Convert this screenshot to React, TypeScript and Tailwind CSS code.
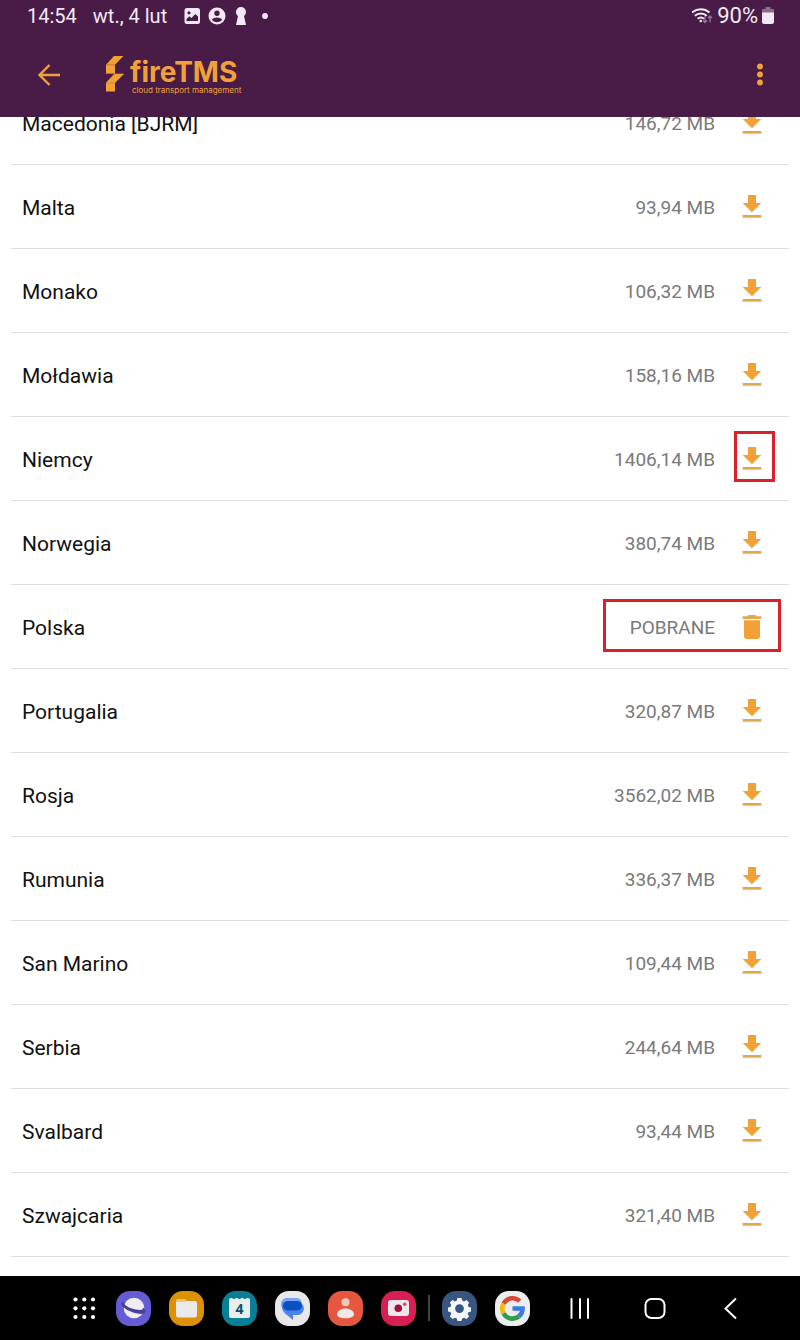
import type { ReactNode } from "react";

type Country = {
  name: string;
  size?: string;
  highlight?: "icon" | "status";
};

const countries: Country[] = [
  { name: "Macedonia [BJRM]", size: "146,72 MB" },
  { name: "Malta", size: "93,94 MB" },
  { name: "Monako", size: "106,32 MB" },
  { name: "Mołdawia", size: "158,16 MB" },
  { name: "Niemcy", size: "1406,14 MB", highlight: "icon" },
  { name: "Norwegia", size: "380,74 MB" },
  { name: "Polska", highlight: "status" },
  { name: "Portugalia", size: "320,87 MB" },
  { name: "Rosja", size: "3562,02 MB" },
  { name: "Rumunia", size: "336,37 MB" },
  { name: "San Marino", size: "109,44 MB" },
  { name: "Serbia", size: "244,64 MB" },
  { name: "Svalbard", size: "93,44 MB" },
  { name: "Szwajcaria", size: "321,40 MB" }
];

function DownloadIcon() {
  return (
    <svg viewBox="0 0 24 24" className="size-8" aria-hidden="true">
      <path d="M19 9h-4V3H9v6H5l7 7 7-7z" fill="#f2a138" />
      <path d="M5 18v2h14v-2H5z" fill="#e3a74f" />
    </svg>
  );
}

function TrashIcon() {
  return (
    <svg viewBox="0 0 24 24" className="size-8" aria-hidden="true">
      <path d="M6 19c0 1.100.9 2 2 2h8c1.100 0 2-.9 2-2V7H6v12z" fill="#f2a138" />
      <path d="M19 4h-3.500l-1-1h-5l-1 1H5v2h14V4z" fill="#e3a74f" />
    </svg>
  );
}

function StatusBar() {
  return (
    <div className="flex h-8 items-center justify-between pr-[26px] pl-[27px] text-[#f3e9f5]">
      <div className="flex items-center">
        <span className="text-[20px] leading-6">14:54</span>
        <span className="ml-4 text-[20px] leading-6">wt., 4 lut</span>
        <svg viewBox="0 0 84 18" className="ml-[17px] h-[18px] w-[84px]" aria-hidden="true">
          <path
            fillRule="evenodd"
            fill="currentColor"
            d="M3 1h10.500a2.500 2.500 0 0 1 2.500 2.500v11a2.500 2.500 0 0 1-2.500 2.500H3A2.500 2.500 0 0 1 .5 14.500v-11A2.500 2.500 0 0 1 3 1zM5 4.200a1.600 1.600 0 1 0 0 3.200 1.600 1.600 0 0 0 0-3.200zM2.500 14h11.500V9.500L11.300 7 7.500 11 5.300 9.200 2.500 12z"
          />
          <path
            fillRule="evenodd"
            fill="currentColor"
            d="M33 .5a8.500 8.500 0 1 1 0 17 8.500 8.500 0 0 1 0-17zM33 3.500a2.700 2.700 0 1 0 0 5.400 2.700 2.700 0 0 0 0-5.400zM27.800 12.700c1.200 1.600 3 2.500 5.200 2.500s4-.9 5.200-2.500c-1.200-1.500-3.200-2.200-5.200-2.200s-4 .7-5.200 2.200z"
          />
          <path
            fill="currentColor"
            d="M57 0a5 5 0 0 0-5 5c0 1.600.8 3 2 4l-2 9h10l-2-9c1.200-1 2-2.400 2-4a5 5 0 0 0-5-5z"
          />
          <circle cx="81" cy="9" r="2.900" fill="currentColor" />
        </svg>
      </div>
      <div className="flex items-center">
        <svg viewBox="0 0 24 18" className="h-[18px] w-6" fill="none" stroke="currentColor" aria-hidden="true">
          <path d="M0 5.500a13.500 13.500 0 0 1 17.500 0M2.800 8.800a9 9 0 0 1 12 0M5.600 11.800a5 5 0 0 1 6.400 0" strokeWidth="1.900" />
          <circle cx="8.800" cy="14" r="1.300" fill="currentColor" stroke="none" />
          <path d="M13 9v6.500m-2-2 2 2 2-2M18 15.500V9m-2 2 2-2 2 2" strokeWidth="1.300" opacity="0.450" />
        </svg>
        <span className="ml-[1px] text-[22px] leading-6">90%</span>
        <svg viewBox="0 0 12 18" className="ml-1 h-[18px] w-3" aria-hidden="true">
          <path d="M3.500 0h5v2H11a1 1 0 0 1 1 1v3H0V3a1 1 0 0 1 1-1h2.500z" fill="#8a6c8d" />
          <path d="M0 5.500h12V15a2 2 0 0 1-2 2H2a2 2 0 0 1-2-2z" fill="currentColor" />
        </svg>
      </div>
    </div>
  );
}

function Toolbar() {
  return (
    <div className="flex h-[85px] items-center pr-6 pl-[33px] text-[#f2a138]">
      <button type="button" aria-label="Wstecz">
        <svg viewBox="0 0 32 32" className="size-8" fill="none" stroke="currentColor" strokeWidth="2.400" aria-hidden="true">
          <path d="M27 16H6.500M16.500 6l-10 10 10 10" />
        </svg>
      </button>
      <div className="ml-10 flex items-end gap-[6px]">
        <svg viewBox="0 0 19 38" className="h-[38px] w-[19px]" fill="currentColor" aria-hidden="true">
          <path d="M9 0h9.500L10 8.700H1zM1 9.200h9v8.300H1zM9.500 18H19l-9 8.700H1zM1 27.200h9v8.300H1z" />
          <path d="M1 8.500h9v9h9L10 27v8H1v-8.500l8.500-9H1z" opacity="0.600" />
        </svg>
        <div className="font-['Inter',sans-serif]">
          <p className="text-[28px] leading-7 font-bold">fireTMS</p>
          <p className="pl-[2px] text-[8px] leading-2">cloud transport management</p>
        </div>
      </div>
      <button type="button" aria-label="Menu" className="ml-auto">
        <svg viewBox="0 0 32 32" className="size-8" fill="currentColor" aria-hidden="true">
          <circle cx="16" cy="7.500" r="2.900" />
          <circle cx="16" cy="15.500" r="2.900" />
          <circle cx="16" cy="23.500" r="2.900" />
        </svg>
      </button>
    </div>
  );
}

function CountryRow({ country }: { country: Country }) {
  return (
    <li className="flex h-21 items-center justify-between border-b border-[#dedede] pr-[21px] pl-[11px]">
      <span className="pt-[2px] text-[21px] leading-7 text-[#111111]">{country.name}</span>
      <div className="relative flex items-center gap-[21px]">
        <span className="pt-[2px] text-[19px] leading-7 text-[#7a7a7a]">{country.size ?? "POBRANE"}</span>
        <button type="button" aria-label={country.size ? `Pobierz ${country.name}` : `Usuń ${country.name}`}>
          {country.size ? <DownloadIcon /> : <TrashIcon />}
        </button>
        {country.highlight === "icon" && (
          <span className="pointer-events-none absolute -top-3 -right-[7px] h-[51px] w-[41px] border-3 border-[#dc2029]" />
        )}
        {country.highlight === "status" && (
          <span className="pointer-events-none absolute -top-3 -right-[13px] h-[53px] w-[178px] border-3 border-[#dc2029]" />
        )}
      </div>
    </li>
  );
}

function AppIcon({ label, className, children }: { label: string; className: string; children: ReactNode }) {
  return (
    <button type="button" aria-label={label} className={`size-[35px] shrink-0 overflow-hidden rounded-[14px] ${className}`}>
      <svg viewBox="0 0 35 35" className="size-full" aria-hidden="true">
        {children}
      </svg>
    </button>
  );
}

function Dock() {
  return (
    <nav className="flex h-16 items-center gap-[18px] bg-black pr-[53px] pl-[70px] text-white">
      <button type="button" aria-label="Aplikacje">
        <svg viewBox="0 0 28 28" className="size-7" fill="currentColor" aria-hidden="true">
          {[5.500, 14.300, 23].map((y) =>
            [5.500, 14.300, 23].map((x) => <circle key={`${x}-${y}`} cx={x} cy={y} r="2.100" />)
          )}
        </svg>
      </button>
      <AppIcon label="Internet" className="bg-[#655bd3]">
        <circle cx="18" cy="17" r="10.300" fill="#eeeef2" />
        <path
          d="M8.500 11.500C4 10.500 4 14 9 17.500c6.500 4.400 17 7 20 4.300 1.700-1.700-.5-4.300-2.500-5.500 1 1.500.5 2.500-2 2.600-5 .2-12.500-2.500-15-4.700-.8-.7-1-1.600-1-2.700z"
          fill="#4c3d9f"
        />
      </AppIcon>
      <AppIcon label="Moje pliki" className="bg-[#dd9206]">
        <path d="M7 10a2 2 0 0 1 2-2h6.500a2 2 0 0 1 2 2v4H7z" fill="#f2c574" />
        <path d="M7 11h9.500l1.500-1h7.500a2.500 2.500 0 0 1 2.500 2.500v11.500a2.500 2.500 0 0 1-2.500 2.500h-16A2.500 2.500 0 0 1 7 24z" fill="#ebeaea" />
      </AppIcon>
      <AppIcon label="Kalendarz" className="bg-[#087f97]">
        <path d="M7 9a2 2 0 0 1 2-2h1.200a2 2 0 0 0 3.600 0h1.900a2 2 0 0 0 3.600 0h1.900a2 2 0 0 0 3.600 0H26a2 2 0 0 1 2 2v16a2 2 0 0 1-2 2H9a2 2 0 0 1-2-2z" fill="#e8eeee" />
        <text x="17.500" y="22.500" textAnchor="middle" fontFamily="Open Sans, sans-serif" fontSize="14" fontWeight="700" fill="#0b5566">
          4
        </text>
      </AppIcon>
      <AppIcon label="Wiadomości" className="bg-[#e8e8ea]">
        <path d="M11 7h10a6 6 0 0 1 6 5v5L17 22 7 17a7 7 0 0 1-1-3.500A6.500 6.500 0 0 1 11 7z" fill="#79a4f3" />
        <path d="M8 11h14a7 7 0 0 1 7 6.500 7 7 0 0 1-7 6.500h-4v5l-6-5c-3-2-5.500-6-5-9z" fill="#4b83ee" />
        <rect x="8" y="10" width="19" height="9.500" rx="4.700" fill="#0b50c0" />
      </AppIcon>
      <AppIcon label="Kontakty" className="bg-[#e5573f]">
        <circle cx="17.500" cy="11.300" r="4" fill="#f6c6bb" />
        <path d="M9 23.500c0-3.500 4-6 8.500-6s8.500 2.500 8.500 6c0 2.300-4 3.700-8.500 3.700S9 25.800 9 23.500z" fill="#f1e9e7" />
      </AppIcon>
      <AppIcon label="Aparat" className="bg-[#d61f53]">
        <rect x="7" y="9" width="21" height="16" rx="3" fill="#f1e7ea" />
        <circle cx="17.300" cy="17.300" r="3.800" fill="#9d1238" />
        <circle cx="23.700" cy="13.300" r="1.800" fill="#d2486f" />
      </AppIcon>
      <span className="-mx-[6px] h-[26px] w-[2px] bg-[#444444]" />
      <AppIcon label="Ustawienia" className="bg-[#38567f]">
        <path
          fillRule="evenodd"
          fill="#f4f6f9"
          d="M15.500 7h4l.7 2.600 1.900.8 2.400-1.400 2.700 2.700-1.400 2.400.8 1.900 2.400.6v3.900l-2.500.7-.8 1.900 1.400 2.300-2.700 2.700-2.300-1.300-1.900.8-.7 2.400h-4l-.7-2.500-1.900-.8-2.300 1.400-2.700-2.700 1.300-2.400-.8-1.900L6 20.500v-4l2.400-.6.8-1.900-1.300-2.400L10.600 9l2.300 1.400 1.900-.8zM17.500 13.200a4.400 4.400 0 1 0 0 8.800 4.400 4.400 0 0 0 0-8.800z"
        />
      </AppIcon>
      <AppIcon label="Google" className="bg-[#ededed]">
        <g fill="none" strokeWidth="4.600">
          <path d="M24.700 10.100A10.200 10.200 0 0 0 8.600 12.600" stroke="#d8473a" />
          <path d="M8.600 12.600a10.200 10.200 0 0 0 0 9.800" stroke="#f4b90b" />
          <path d="M8.600 22.400a10.200 10.200 0 0 0 15.300 3" stroke="#2f9f4f" />
          <path d="M23.900 25.400a10.200 10.200 0 0 0 3.600-7.900H17.500" stroke="#3b7be8" />
        </g>
      </AppIcon>
      <div className="ml-auto flex items-center gap-11">
        <button type="button" aria-label="Ostatnie">
          <svg viewBox="0 0 32 32" className="size-8" stroke="currentColor" strokeWidth="2" strokeLinecap="round" aria-hidden="true">
            <path d="M8.500 7v19M17 7v19M25 7v19" />
          </svg>
        </button>
        <button type="button" aria-label="Ekran główny">
          <svg viewBox="0 0 32 32" className="size-8" fill="none" stroke="currentColor" strokeWidth="2" aria-hidden="true">
            <rect x="6.500" y="7" width="19" height="19" rx="6" />
          </svg>
        </button>
        <button type="button" aria-label="Cofnij">
          <svg viewBox="0 0 32 32" className="size-8" fill="none" stroke="currentColor" strokeWidth="2" aria-hidden="true">
            <path d="M21 6.500l-10.500 10L21 26.500" />
          </svg>
        </button>
      </div>
    </nav>
  );
}

export default function App() {
  return (
    <div className="flex min-h-screen flex-col bg-white font-['Roboto',sans-serif]">
      <header className="bg-[#481c46]">
        <StatusBar />
        <Toolbar />
      </header>
      <main className="flex-1 overflow-hidden px-[11px]">
        {/* list is scrolled a little, so the first row sits partly under the header */}
        <ul className="-mt-9">
          {countries.map((country) => (
            <CountryRow key={country.name} country={country} />
          ))}
        </ul>
      </main>
      <Dock />
    </div>
  );
}
